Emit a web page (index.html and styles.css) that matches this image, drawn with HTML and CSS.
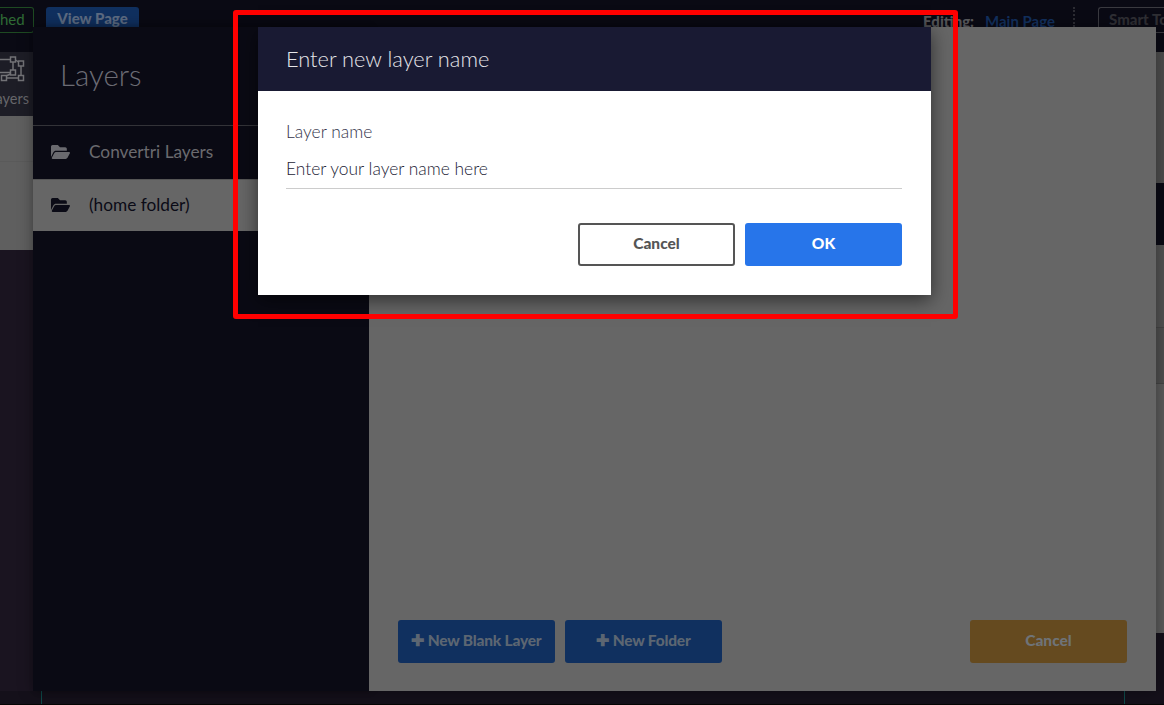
FILE: index.html
```html
<!DOCTYPE html>
<html lang="en">
<head>
<meta charset="utf-8">
<title>Enter new layer name</title>
<link rel="stylesheet" href="styles.css">
</head>
<body>
<div class="app">
  <header class="topbar">
    <div class="topbar-left">
      <span class="status">hed</span>
      <span class="view-page">View Page</span>
    </div>
    <div class="topbar-right">
      <span class="editing">Editing:</span>
      <span class="page-link">Main Page</span>
      <span class="kebab"></span>
      <span class="smart">Smart To</span>
    </div>
  </header>
  <div class="workspace">
    <aside class="left-rail">
      <div class="rail-tool">
        <svg class="rail-icon" width="34" height="30" viewBox="0 0 34 30" fill="none" stroke="#727276" stroke-width="1.5">
          <path d="M0 4.5H12M15 7V15M17.5 5L20.5 7M23 11V20.5M8.5 23H20.5M12.5 19L8 21M0 17.5H12.5"/>
          <rect x="12.5" y="2" width="5" height="5"/><rect x="20.5" y="6" width="5" height="5"/>
          <rect x="12.5" y="15" width="5" height="5"/><rect x="20.5" y="20.5" width="5" height="5"/><rect x="3.5" y="20.5" width="5" height="5"/>
        </svg>
        <span class="rail-label">ayers</span>
      </div>
      <div class="rail-panel"><div class="rail-panel-row"></div></div>
    </aside>
    <main class="canvas">
      <div class="right-strip">
        <div class="strip-a"></div>
        <div class="strip-dark"></div>
        <div class="strip-b"></div>
        <div class="strip-c"></div>
        <div class="strip-d"></div>
      </div>
    </main>
  </div>
  <footer class="bottom">
    <span class="teal-line"></span>
    <span class="teal-line"></span>
  </footer>
</div>

<section class="layers-modal">
  <aside class="layers-side">
    <h2 class="layers-title">Layers</h2>
    <ul class="folder-list">
      <li class="folder">
        <svg class="folder-icon" width="19" height="14" viewBox="0 64 576 384" preserveAspectRatio="none"><path fill="currentColor" d="M572.694 292.093L500.27 416.248A63.997 63.997 0 0 1 444.989 448H45.025c-18.523 0-30.064-20.093-20.731-36.093l72.424-124.155A64 64 0 0 1 152 256h399.964c18.523 0 30.064 20.093 20.73 36.093zM152 224h328v-48c0-26.51-21.49-48-48-48H272l-64-64H48C21.49 64 0 85.49 0 112v278.046l69.077-118.418C86.214 242.25 117.989 224 152 224z"/></svg>
        <span>Convertri Layers</span>
      </li>
      <li class="folder folder-active">
        <svg class="folder-icon" width="19" height="14" viewBox="0 64 576 384" preserveAspectRatio="none"><path fill="currentColor" d="M572.694 292.093L500.27 416.248A63.997 63.997 0 0 1 444.989 448H45.025c-18.523 0-30.064-20.093-20.731-36.093l72.424-124.155A64 64 0 0 1 152 256h399.964c18.523 0 30.064 20.093 20.73 36.093zM152 224h328v-48c0-26.51-21.49-48-48-48H272l-64-64H48C21.49 64 0 85.49 0 112v278.046l69.077-118.418C86.214 242.25 117.989 224 152 224z"/></svg>
        <span>(home folder)</span>
      </li>
    </ul>
  </aside>
  <div class="layers-main">
    <div class="layers-actions">
      <div class="action-group">
        <button class="btn btn-new">✚ New Blank Layer</button>
        <button class="btn btn-new">✚ New Folder</button>
      </div>
      <button class="btn btn-cancel-amber">Cancel</button>
    </div>
  </div>
</section>

<section class="dialog">
  <header class="dialog-head">Enter new layer name</header>
  <div class="dialog-body">
    <label class="field-label">Layer name</label>
    <div class="field-input">Enter your layer name here</div>
    <div class="dialog-actions">
      <button class="btn btn-outline">Cancel</button>
      <button class="btn btn-ok">OK</button>
    </div>
  </div>
</section>

<div class="annotation"></div>
</body>
</html>
```
FILE: styles.css
```css
* { box-sizing: border-box; }
html, body { margin: 0; height: 705px; overflow: hidden; }
body { background: #14101a; font-family: Lato, "Liberation Sans", sans-serif; position: relative; }

.app { display: flex; flex-direction: column; height: 705px; }

.topbar { height: 52px; flex: none; background: #0a0a14; display: flex; justify-content: space-between; padding-top: 7px; }
.topbar-left { display: flex; gap: 12px; align-items: flex-start; }
.status { width: 34px; height: 26px; border: 1px solid #1e4a22; border-left: 0; border-radius: 0 3px 3px 0; color: #2f6b34; font-size: 15px; line-height: 23px; text-align: right; padding-right: 11px; font-weight: 400; }
.view-page { width: 93px; height: 24px; background: #10305f; border-radius: 3px 3px 0 0; color: #5c6b82; font-weight: 900; font-size: 15px; line-height: 23px; text-align: center; }
.topbar-right { display: flex; align-items: flex-start; }
.editing { color: #5a5a5e; font-weight: 900; font-size: 15px; line-height: 20px; margin: 4px 11px 0 0; }
.page-link { color: #12305e; font-size: 15px; font-weight: 700; line-height: 20px; margin-top: 4px; }
.kebab { width: 0; height: 20px; border-left: 2px dotted #2c2c33; margin: 0 23px 0 18px; }
.smart { width: 66px; height: 26px; border: 1px solid #3a3a40; border-right: 0; border-radius: 3px 0 0 3px; color: #2f2f34; font-weight: 900; font-size: 15px; line-height: 22px; padding-left: 10px; white-space: nowrap; }

.workspace { flex: 1; display: flex; min-height: 0; }
.left-rail { width: 33px; flex: none; display: flex; flex-direction: column; background: #1a1420; }
.rail-tool { height: 64px; background: #1d1d26; overflow: hidden; display: flex; flex-direction: column; align-items: flex-end; padding-top: 3px; }
.rail-icon { flex: none; margin-right: 1px; }
.rail-label { color: #66666a; font-size: 14.5px; line-height: 18px; margin-right: 4px; margin-top: 5px; white-space: nowrap; }
.rail-panel { height: 134px; background: #5f5f5f; }
.rail-panel-row { height: 46px; border-bottom: 1px solid #5a5a5a; }

.canvas { flex: 1; display: flex; justify-content: flex-end; background: #14101a; }
.right-strip { width: 8px; display: flex; flex-direction: column; }
.strip-a { height: 131px; background: #4c4c4c; }
.strip-dark { height: 62px; background: #0a0a14; }
.strip-b { height: 83px; background: #515151; border-bottom: 1px solid #444; }
.strip-c { height: 56px; background: #4e4e4e; border-bottom: 1px solid #444; }
.strip-d { height: 249px; background: #5a5a5a; }

.bottom { height: 14px; flex: none; display: flex; justify-content: space-between; padding: 0 39px 0 41px; background: #14101a; border-bottom: 1px solid #050505; }
.teal-line { width: 1px; background: #0e4a4a; }

.layers-modal { position: absolute; left: 33px; top: 27px; width: 1123px; height: 664px; display: flex; box-shadow: 0 0 14px rgba(0,0,0,.35); }
.layers-side { width: 336px; flex: none; background: #0a0a14; box-shadow: 3px 0 6px rgba(0,0,0,.25); }
.layers-title { margin: 0; height: 99px; border-bottom: 1px solid #333338; padding: 28px 0 0 27px; font-size: 29.5px; line-height: 40px; font-weight: 300; color: #6c6c74; }
.folder-list { list-style: none; margin: 0; padding: 0; }
.folder { height: 53px; display: flex; align-items: center; gap: 19px; padding: 0 0 2px 18px; font-size: 17.25px; font-weight: 400; color: #6a6a6f; }
.folder-active { height: 52px; background: #666666; color: #0b0b16; border-top: 1px solid #555; }
.folder-icon { flex: none; }

.layers-main { flex: 1; background: #666666; display: flex; flex-direction: column; justify-content: flex-end; padding: 0 29px 28px; }
.layers-actions { display: flex; justify-content: space-between; }
.action-group { display: flex; gap: 10px; }
.btn { height: 43px; width: 157px; border: 0; border-radius: 3px; font-family: inherit; font-size: 15.5px; font-weight: 900; padding: 0 0 3px; text-align: center; }
.btn-new { background: #10305f; color: #5c6672; letter-spacing: -.2px; }
.btn-cancel-amber { background: #654a1f; color: #6f7377; }

.dialog { position: absolute; left: 258px; top: 27px; width: 673px; height: 268px; background: #fff; box-shadow: 0 5px 18px rgba(0,0,0,.55); }
.dialog-head { height: 64px; background: #191a33; color: #e6e6ea; font-size: 21.8px; font-weight: 300; line-height: 64px; padding-left: 28px; }
.dialog-body { padding: 31px 29px 0 28px; }
.field-label { display: block; color: #33334a; font-size: 17.4px; font-weight: 300; line-height: 20px; }
.field-input { margin-top: 14px; height: 33px; border-bottom: 1px solid #ccc; color: #1c1c36; font-size: 17.4px; font-weight: 300; line-height: 25px; }
.dialog-actions { display: flex; justify-content: flex-end; gap: 10px; margin-top: 34px; }
.btn-outline { background: #fff; border: 2px solid #555; color: #555; }
.btn-ok { background: #2775ea; color: #fff; }

.annotation { position: absolute; left: 233px; top: 10px; width: 725px; height: 309px; border: 5px solid #f00; border-radius: 3px; }
```
